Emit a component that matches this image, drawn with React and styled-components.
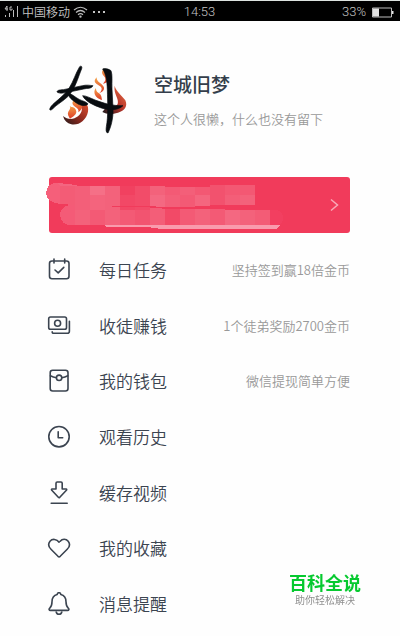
import React from "react";
import styled, { createGlobalStyle } from "styled-components";

const GlobalStyle = createGlobalStyle`
  * { box-sizing: border-box; }
  body {
    margin: 0;
    background: #fefefe;
    font-family: "Noto Sans CJK SC", "Noto Sans", sans-serif;
    font-weight: 350;
    color: #3b4450;
  }
`;

const Page = styled.div`
  min-height: 100vh;
  display: flex;
  flex-direction: column;
`;

const StatusBar = styled.header`
  display: grid;
  grid-template-columns: 1fr auto 1fr;
  align-items: center;
  height: 21px;
  padding: 1px 5px 0 4px;
  border-top: 1px solid #dde3e0;
  background: #000;
  color: #c4c4c4;
  font-size: 12px;
  line-height: 20px;
`;

const StatusGroup = styled.div`
  display: flex;
  align-items: center;
  justify-content: ${(p) => (p.$end ? "flex-end" : "flex-start")};
  gap: ${(p) => (p.$end ? "5px" : "3px")};
`;

const Clock = styled.time`
  font-family: Roboto, sans-serif;
  font-size: 13px;
  font-weight: 300;
`;

const Percent = styled.span`
  font-family: Roboto, sans-serif;
  font-size: 13px;
  font-weight: 300;
`;

const Main = styled.main`
  flex: 1;
  display: flex;
  flex-direction: column;
  padding: 42px 50px 4px 49px;
`;

const Profile = styled.section`
  display: flex;
  align-items: flex-start;
  gap: 25px;
  height: 114px;
`;

const Avatar = styled.svg`
  flex: none;
  width: 80px;
  height: 74px;
`;

const ProfileText = styled.div`
  padding-top: 7px;
  white-space: nowrap;
`;

const Name = styled.h1`
  margin: 0;
  font-size: 19px;
  line-height: 28px;
  font-weight: 500;
  color: #343e4b;
`;

const Bio = styled.p`
  margin: 11px 0 0;
  font-size: 13px;
  line-height: 20px;
  color: #999;
`;

const Banner = styled.a`
  position: relative;
  display: flex;
  align-items: center;
  justify-content: flex-end;
  height: 56px;
  padding-right: 11px;
  border-radius: 3px;
  background: #f13b5b;
`;

const Mosaic = styled.svg`
  position: absolute;
  left: 0;
  top: 0;
  overflow: visible;
`;

const Menu = styled.nav`
  flex: 1;
  margin-top: 9px;
  display: grid;
  grid-auto-rows: minmax(48px, 1fr);
`;

const MenuItem = styled.a`
  display: flex;
  align-items: center;
  color: inherit;
  text-decoration: none;
  white-space: nowrap;
`;

const Icon = styled.svg`
  flex: none;
  width: 24px;
  height: 24px;
  margin: 0 28px 0 -2px;
  fill: none;
  stroke: #3b4450;
  stroke-width: 1.6;
  stroke-linecap: round;
  stroke-linejoin: round;
`;

const Label = styled.span`
  font-size: 17px;
  line-height: 24px;
`;

const Hint = styled.span`
  margin-left: auto;
  font-size: 13px;
  line-height: 20px;
  color: #999;
`;

const Watermark = styled.aside`
  position: fixed;
  right: 39px;
  bottom: 30px;
  text-align: center;
  pointer-events: none;
`;

const Brand = styled.div`
  font-size: 18px;
  line-height: 18px;
  font-weight: 700;
  color: #06c92f;
`;

const Slogan = styled.div`
  margin-top: 3px;
  font-size: 10px;
  line-height: 12px;
  font-weight: 400;
  color: #8f8f8f;
`;

const items = [
  {
    label: "每日任务",
    hint: "坚持签到赢18倍金币",
    icon: (
      <>
        <rect x="2.5" y="3" width="19.5" height="17.7" rx="2.5" />
        <path d="M7 1v4M17.7 1v4M8 12l3.2 2.8L16.8 9.4" />
      </>
    ),
  },
  {
    label: "收徒赚钱",
    hint: "1个徒弟奖励2700金币",
    icon: (
      <>
        <rect x="1.7" y="3" width="17.8" height="12.3" rx="1.8" />
        <circle cx="10.6" cy="9.2" r="3" />
        <path d="M22.4 7.2v10.1q0 2-2 2H7.2q-2 0-2-1.4" />
      </>
    ),
  },
  {
    label: "我的钱包",
    hint: "微信提现简单方便",
    icon: (
      <>
        <rect x="3.2" y="1.2" width="17.8" height="20.8" rx="2.5" />
        <circle cx="12.1" cy="8.8" r="2.7" />
        <path d="M3.4 6.8q2.8 1.6 6 2M20.8 6.8q-2.8 1.6-6 2" />
      </>
    ),
  },
  {
    label: "观看历史",
    icon: (
      <>
        <circle cx="12" cy="11.7" r="10.2" />
        <path d="M11.2 6.7v6h4.5" />
      </>
    ),
  },
  {
    label: "缓存视频",
    icon: (
      <path d="M10.2 1h3.8q1.2 0 1.2 1.2V8H19q1.2.2.4 1.3l-6.6 7q-.8.7-1.5 0L4.8 9.3Q4 8.2 5.2 8H9V2.2Q9 1 10.2 1zM4.2 22.3h16" />
    ),
  },
  {
    label: "我的收藏",
    icon: (
      <path d="M12.1 6.2C9.8 2.8 5.2 2.6 3 5.2 1 7.8 1.5 10.8 4 13.3l7 7q1.1 1 2.2 0l7-7c2.5-2.5 3-5.5 1-8.1-2.2-2.6-6-2.400-8 0" />
    ),
  },
  {
    label: "消息提醒",
    icon: (
      <>
        <path d="M12 .7q1.6 0 1.8 1.8c3.5.9 5.2 3.6 5.2 7.3 0 3.5.6 5 2.4 6.5.9 1 .5 2.1-.8 2.1H3.4c-1.3 0-1.7-1.1-.8-2.1C4.4 14.8 5 13.3 5 9.8c0-3.7 1.7-6.4 5.2-7.3Q10.4.7 12 .7z" />
        <path d="M9.2 20q.6 2.3 2.8 2.3t2.8-2.3" />
      </>
    ),
  },
];

const tiles = [
  [11, 9, 15, 24, 0.17], [26, 9, 15, 24, 0.19], [41, 9, 15, 9, 0.27],
  [41, 18, 15, 15, 0.21], [56, 9, 15, 24, 0.2], [71, 9, 15, 9, 0.03],
  [71, 18, 15, 15, 0.07], [86, 9, 15, 24, 0.09], [101, 9, 15, 9, 0.2],
  [101, 18, 15, 12, 0.24], [116, 10, 15, 8, 0.16], [116, 18, 15, 12, 0.19],
  [131, 10, 15, 8, 0.19], [131, 18, 15, 12, 0.16], [146, 10, 15, 8, 0.15],
  [146, 18, 15, 11, 0.22], [161, 8, 15, 20, 0.12], [176, 8, 15, 10, 0.15],
  [176, 18, 15, 10, 0.18], [191, 8, 15, 10, 0.15], [191, 18, 15, 10, 0.2],
  [26, 33, 15, 15, 0.2], [41, 33, 15, 15, 0.16], [56, 33, 15, 15, 0.2],
  [71, 33, 15, 15, 0.16], [86, 33, 15, 15, 0.13], [101, 31, 15, 17, 0.18],
  [116, 32, 15, 16, 0.08], [131, 32, 15, 16, 0.16], [146, 32, 15, 16, 0.2],
  [161, 32, 15, 16, 0.16], [176, 33, 15, 15, 0.23], [191, 33, 15, 15, 0.2],
  [206, 33, 15, 15, 0.17],
];

function AvatarArt() {
  return (
    <Avatar viewBox="27 24 240 222" role="img" aria-label="头像">
      <defs>
        <linearGradient id="ember" x1="0" y1="0" x2="0" y2="1">
          <stop offset="0" stopColor="#f5a64b" />
          <stop offset="1" stopColor="#dd3926" />
        </linearGradient>
        <linearGradient id="curl" x1="1" y1="0" x2="0" y2="1">
          <stop offset="0" stopColor="#e65330" />
          <stop offset=".55" stopColor="#8c281e" />
          <stop offset="1" stopColor="#211a1a" />
        </linearGradient>
        <linearGradient id="tail" x1="1" y1="0" x2="0" y2="1">
          <stop offset="0" stopColor="#f17b48" />
          <stop offset=".5" stopColor="#b6342a" />
          <stop offset="1" stopColor="#16191c" />
        </linearGradient>
      </defs>
      <path fill="url(#tail)" d="M224 92c4 18 21 28 32 44 8 18-2 32-22 37-20 6-34 5-47-2l14-17c17 5 28 2 32-7 5-17-13-29-9-55z" />
      <path fill="url(#curl)" d="M115 138c24-1 32 14 29 32-5 25-27 42-50 38-13-3-21-11-25-25 14 12 32 11 45 1 14-12 17-29 1-46z" />
      <path fill="url(#ember)" d="M87 151c7 6 3 12-2 19-4 7 1 14 5 21 15-9 24-17 16-29-6-8-13-3-19-11z" />
      <path fill="url(#ember)" d="M107 132c-14 8-11 17-2 23 9 5 12 10 10 17 14-10 15-20 5-27-8-5-14-6-13-13z" />
      <path fill="url(#ember)" d="M192 40c-11 12-4 19 2 26 5 8 0 15-5 20 16-3 23-15 16-26-5-8-14-10-13-20z" />
      <path fill="url(#ember)" d="M170 67c-12 12-4 19 8 25 11 6 8 15-1 23 15-5 20-16 10-25-7-7-18-11-17-23z" />
      <path fill="url(#ember)" d="M168 99c-7 8-5 17-1 24 7 9 12 9 19 12-2-14-4-17-10-21-7-4-8-9-8-15z" />
      <g fill="#080c10" stroke="#080c10" strokeWidth="2">
        <path d="M51 111c0-5 8-7 19-7l57-12c14-3 22-1 32 0-5 10-17 7-28 10l-48 10c-14 2-24 5-32-1z" />
        <path d="M119 35c5-4 8 0 6 6-10 24-16 49-31 71-12 18-29 27-44 39-11 9-16 16-20 14-3-3 4-13 12-20 18-16 33-27 45-45 14-22 19-44 32-65z" />
        <path d="M84 116c8-2 18 8 30 15 14 8 26 9 30 16-7 8-24 5-36-4-11-8-22-16-24-27z" />
        <path d="M128 122c10 0 23 7 37 13 26 9 50 18 84 17-14 15-43 14-65 7-22-8-48-19-56-37z" />
        <path d="M188 42c8-3 18 0 25 5 5 13 2 33 3 55l3 59c1 29-6 55-15 73-7-1-6-10-5-19 6-30 4-76 3-111-1-29-4-45-14-62z" />
      </g>
    </Avatar>
  );
}

function BannerMosaic() {
  return (
    <Mosaic width="234" height="56" viewBox="0 0 234 56" fill="#fff" shapeRendering="crispEdges" aria-hidden="true">
      <path fill="#f55f7a" d="M11 6Q2 5-1 10q-4 7 1 13 5 3 11 4z" />
      <path fill="#f46580" d="M9 6l19 2v1H11z" />
      <path fill="#f23f60" d="M221 33h7q6 2 6 8t-5 7h-8z" />
      {tiles.map(([x, y, w, h, o]) => (
        <rect key={`${x}-${y}`} x={x} y={y} width={w} height={h} opacity={o} />
      ))}
      <path fill="#f13b5b" d="M11 27l15 1v5H11zM63 29h44v1h44v2h-36l-8-2H63z" />
      <path fill="#f45b77" d="M26 28q-14-1-15 10 1 10 11 10h4z" />
      <path fill="#f99bad" d="M55 48h177l-5 4H112l-14-2H58z" />
    </Mosaic>
  );
}

export default function App() {
  return (
    <>
      <GlobalStyle />
      <Page>
        <StatusBar>
          <StatusGroup>
            <svg width="15" height="14" viewBox="0 0 15 14" fill="none" stroke="#bcbcbc" aria-label="4G">
              <path d="M3 6V1L1 4h3M8 2H6v3h2V3.5M1.5 10v2M5.5 8v4M9.5 5v7M13.5 1v11" />
            </svg>
            <span>中国移动</span>
            <svg width="15" height="12" viewBox="0 0 15 12" fill="none" stroke="#bcbcbc" strokeWidth="1.2" aria-label="Wi-Fi">
              <path d="M1 4q6.5-5.5 13 0M3 6.5q4.5-4 9 0M5 8.8q2.5-2.2 5 0" />
              <circle cx="7.5" cy="10.6" r=".6" />
            </svg>
            <svg width="14" height="4" viewBox="0 0 14 4" fill="#c4c4c4" aria-hidden="true">
              <path d="M2 1h2v2H2zM7 1h2v2H7zM12 1h2v2h-2z" />
            </svg>
          </StatusGroup>
          <Clock>14:53</Clock>
          <StatusGroup $end>
            <Percent>33%</Percent>
            <svg width="24" height="11" viewBox="0 0 24 11" aria-label="电量">
              <path d="M1.5 1h19v9h-19z" fill="none" stroke="#bcbcbc" />
              <path d="M2 1.5h6v8H2zM21 4h1.5v3H21z" fill="#e2e2e2" />
            </svg>
          </StatusGroup>
        </StatusBar>
        <Main>
          <Profile>
            <AvatarArt />
            <ProfileText>
              <Name>空城旧梦</Name>
              <Bio>这个人很懒，什么也没有留下</Bio>
            </ProfileText>
          </Profile>
          <Banner href="#banner" aria-label="活动">
            <BannerMosaic />
            <svg width="9" height="14" viewBox="0 0 9 14" fill="none" stroke="#f9a9b8" strokeWidth="1.5" aria-hidden="true">
              <path d="M1 1.5L7.5 7 1 12.5" />
            </svg>
          </Banner>
          <Menu>
            {items.map((item) => (
              <MenuItem key={item.label} href="#menu">
                <Icon viewBox="0 0 24 24" aria-hidden="true">{item.icon}</Icon>
                <Label>{item.label}</Label>
                {item.hint && <Hint>{item.hint}</Hint>}
              </MenuItem>
            ))}
          </Menu>
        </Main>
        <Watermark>
          <Brand>百科全说</Brand>
          <Slogan>助你轻松解决</Slogan>
        </Watermark>
      </Page>
    </>
  );
}
